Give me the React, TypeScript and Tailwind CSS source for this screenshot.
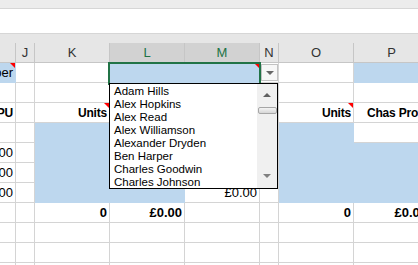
import React from "react";

type CellData = {
  t?: string;
  b?: boolean;
  align?: "r" | "l";
  blue?: boolean;
  tri?: boolean;
  word?: boolean;
};

const COLS = ["I", "J", "K", "L", "M", "N", "O", "P"];
const SELECTED = ["L", "M"];

const E: CellData = {};
const B: CellData = { blue: true };

const rows: CellData[][] = [
  [{ t: "Number", align: "r", blue: true, tri: true }, E, E, B, { blue: true, tri: true }, E, E, B],
  [E, E, E, E, E, E, E, E],
  [
    { t: "PU", b: true, align: "r", word: true },
    E,
    { t: "Units", b: true, align: "r", tri: true, word: true },
    E,
    E,
    E,
    { t: "Units", b: true, align: "r", tri: true, word: true },
    { t: "Chas Profit", b: true, align: "l", word: true },
  ],
  [E, E, B, B, B, E, B, E],
  [{ t: "£0.00", align: "r" }, E, B, B, B, E, B, B],
  [{ t: "£0.00", align: "r" }, E, B, B, B, E, B, B],
  [{ t: "£0.00", align: "r" }, E, B, B, { t: "£0.00", align: "r" }, E, B, B],
  [
    E,
    E,
    { t: "0", b: true, align: "r" },
    { t: "£0.00", b: true, align: "r" },
    E,
    E,
    { t: "0", b: true, align: "r" },
    { t: "£0.00", b: true, align: "r" },
  ],
  [E, E, E, E, E, E, E, E],
  [E, E, E, E, E, E, E, E],
  [E, E, E, E, E, E, E, E],
];

const names = [
  "Adam Hills",
  "Alex Hopkins",
  "Alex Read",
  "Alex Williamson",
  "Alexander Dryden",
  "Ben Harper",
  "Charles Goodwin",
  "Charles Johnson",
];

function Tri() {
  return (
    <span className="absolute top-0 right-0 w-0 h-0 border-l-[5px] border-l-transparent border-t-[5px] border-t-[#ff0000]" />
  );
}

function Cell({ c }: { c: CellData }) {
  return (
    <div
      className={
        "relative h-[20px] flex items-center overflow-hidden border-r border-b px-[2px] text-black " +
        (c.word ? "text-[12px] tracking-[-0.2px] " : "text-[13px] ") +
        (c.blue ? "bg-[#bdd7ee] border-[#bdd7ee] " : "bg-white border-[#d4d4d4] ") +
        (c.align === "r" ? "justify-end " : "justify-start ") +
        (c.b ? "font-bold" : "font-normal")
      }
    >
      {c.t && (
        <span className={"shrink-0 whitespace-nowrap " + (c.align === "l" ? "pl-[11px]" : "")}>{c.t}</span>
      )}
      {c.tri && <Tri />}
    </div>
  );
}

export default function App() {
  return (
    <div
      className="relative w-[418px] h-[265px] overflow-hidden bg-white"
      style={{ fontFamily: '"Liberation Sans", Arial, sans-serif' }}
    >
      {/* ribbon edge + formula bar */}
      <div className="h-[9px] bg-[#ececec] border-b border-[#d6d6d6]" />
      <div className="h-[25px] bg-white border-b border-[#d6d6d6]" />
      <div className="h-[9px] bg-[#e6e6e6]" />

      <div className="grid grid-cols-[16px_19px_75px_75px_75px_19px_75px_76px] w-[430px]">
        {/* column headers */}
        {COLS.map((c) => (
          <div
            key={c}
            className={
              "h-[20px] flex items-center justify-center border-r border-b border-[#c6c6c6] text-[13px] " +
              (SELECTED.includes(c) ? "bg-[#d2d2d2] text-[#217346]" : "bg-[#e6e6e6] text-[#333]")
            }
          >
            {c === "I" ? "" : c}
          </div>
        ))}

        {rows.map((r, i) => r.map((c, j) => <Cell key={i + "-" + j} c={c} />))}
      </div>

      {/* active cell selection */}
      <div className="absolute left-[108px] top-[62px] w-[153px] h-[23px] border-2 border-[#217346]" />

      {/* validation dropdown button */}
      <div className="absolute left-[261px] top-[64px] w-[17px] h-[17px] bg-[#f7f7f7] border border-[#c2c2c2] flex items-center justify-center">
        <span className="w-0 h-0 border-l-[4px] border-r-[4px] border-t-[4px] border-l-transparent border-r-transparent border-t-[#666]" />
      </div>

      {/* dropdown list */}
      <div className="absolute left-[109px] top-[83px] w-[169px] h-[106px] bg-white border border-black flex">
        <div className="flex-1 pt-[1px] pl-[4px]">
          {names.map((n) => (
            <div key={n} className="h-[13px] leading-[13px] text-[11.5px] text-black whitespace-nowrap">
              {n}
            </div>
          ))}
        </div>
        <div className="w-[20px] h-full bg-[#f0f0f0] flex flex-col items-center">
          <div className="h-[20px] w-full flex items-center justify-center pt-[2px]">
            <span className="w-0 h-0 border-l-[4px] border-r-[4px] border-b-[4px] border-l-transparent border-r-transparent border-b-[#606060]" />
          </div>
          <div className="mt-[3px] w-[19px] h-[7px] rounded-[2px] border border-[#a6a6a6] bg-gradient-to-b from-[#f4f4f4] to-[#d6d6d6]" />
          <div className="flex-1" />
          <div className="h-[20px] w-full flex items-center justify-center pb-[4px]">
            <span className="w-0 h-0 border-l-[4px] border-r-[4px] border-t-[4px] border-l-transparent border-r-transparent border-t-[#808080]" />
          </div>
        </div>
      </div>
    </div>
  );
}
